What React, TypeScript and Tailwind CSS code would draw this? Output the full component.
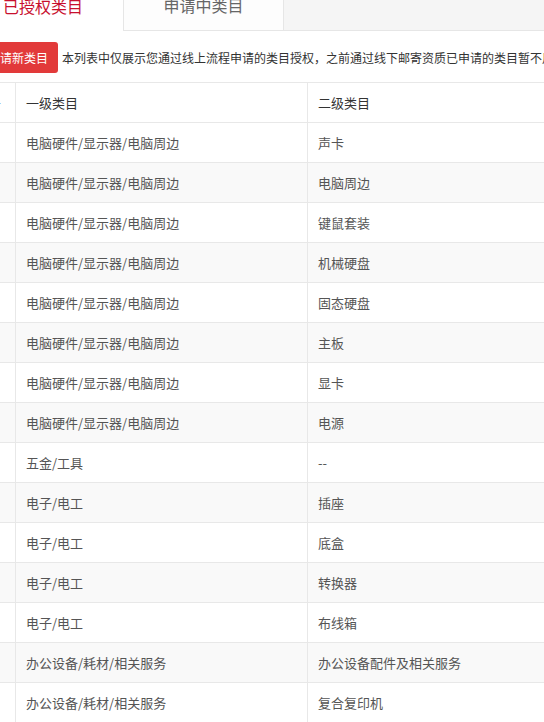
import React from "react";

const rows: [string, string][] = [
  ["电脑硬件/显示器/电脑周边", "声卡"],
  ["电脑硬件/显示器/电脑周边", "电脑周边"],
  ["电脑硬件/显示器/电脑周边", "键鼠套装"],
  ["电脑硬件/显示器/电脑周边", "机械硬盘"],
  ["电脑硬件/显示器/电脑周边", "固态硬盘"],
  ["电脑硬件/显示器/电脑周边", "主板"],
  ["电脑硬件/显示器/电脑周边", "显卡"],
  ["电脑硬件/显示器/电脑周边", "电源"],
  ["五金/工具", "--"],
  ["电子/电工", "插座"],
  ["电子/电工", "底盒"],
  ["电子/电工", "转换器"],
  ["电子/电工", "布线箱"],
  ["办公设备/耗材/相关服务", "办公设备配件及相关服务"],
  ["办公设备/耗材/相关服务", "复合复印机"],
];

export default function App() {
  return (
    <div
      className="w-[544px] h-[722px] overflow-hidden bg-white"
      style={{ fontFamily: '"Noto Sans CJK SC", "Noto Sans", sans-serif' }}
    >
      {/* Tabs */}
      <div className="flex h-[51px] -mt-[20px] -ml-[37px] w-[600px] bg-[#f5f5f5]">
        <div className="w-[161px] h-[51px] bg-white border-r border-[#e6e6e6] flex items-center justify-center text-[16px] text-[#c8102e]">
          已授权类目
        </div>
        <div className="w-[160px] h-[51px] bg-[#fdfdfd] border-r border-b border-[#e6e6e6] flex items-center justify-center text-[16px] text-[#666]">
          申请中类目
        </div>
        <div className="flex-1 h-[51px] border-b border-[#e6e6e6]" />
      </div>

      {/* Toolbar */}
      <div className="flex items-center mt-[11px] -ml-[22px] w-[700px]">
        <div className="h-[31px] px-[10px] flex items-center rounded-[3px] bg-[#e23a3a] text-white text-[12px] whitespace-nowrap">
          申请新类目
        </div>
        <div className="ml-[4px] text-[12px] text-[#333] whitespace-nowrap">
          本列表中仅展示您通过线上流程申请的类目授权，之前通过线下邮寄资质已申请的类目暂不用重复申请
        </div>
      </div>

      {/* Table */}
      <div className="mt-[9px] -ml-[45px] w-[700px] border-t border-[#e8e8e8]">
        <div className="flex h-[40px] border-b border-[#e8e8e8] bg-white text-[13px] text-[#333]">
          <div className="w-[61px] border-r border-[#e8e8e8] flex items-center pl-[20px] whitespace-nowrap">
            序号
          </div>
          <div className="w-[292px] border-r border-[#e8e8e8] flex items-center px-[10px]">
            一级类目
          </div>
          <div className="flex-1 flex items-center px-[10px]">二级类目</div>
        </div>
        {rows.map(([a, b], i) => (
          <div
            key={i}
            className={`flex h-[40px] border-b border-[#e8e8e8] text-[13px] text-[#555] ${
              i % 2 === 1 ? "bg-[#f9f9f9]" : "bg-white"
            }`}
          >
            <div className="w-[61px] border-r border-[#e8e8e8]" />
            <div className="w-[292px] border-r border-[#e8e8e8] flex items-center px-[10px] whitespace-nowrap">
              {a}
            </div>
            <div className="flex-1 flex items-center px-[10px] whitespace-nowrap">{b}</div>
          </div>
        ))}
      </div>
    </div>
  );
}
